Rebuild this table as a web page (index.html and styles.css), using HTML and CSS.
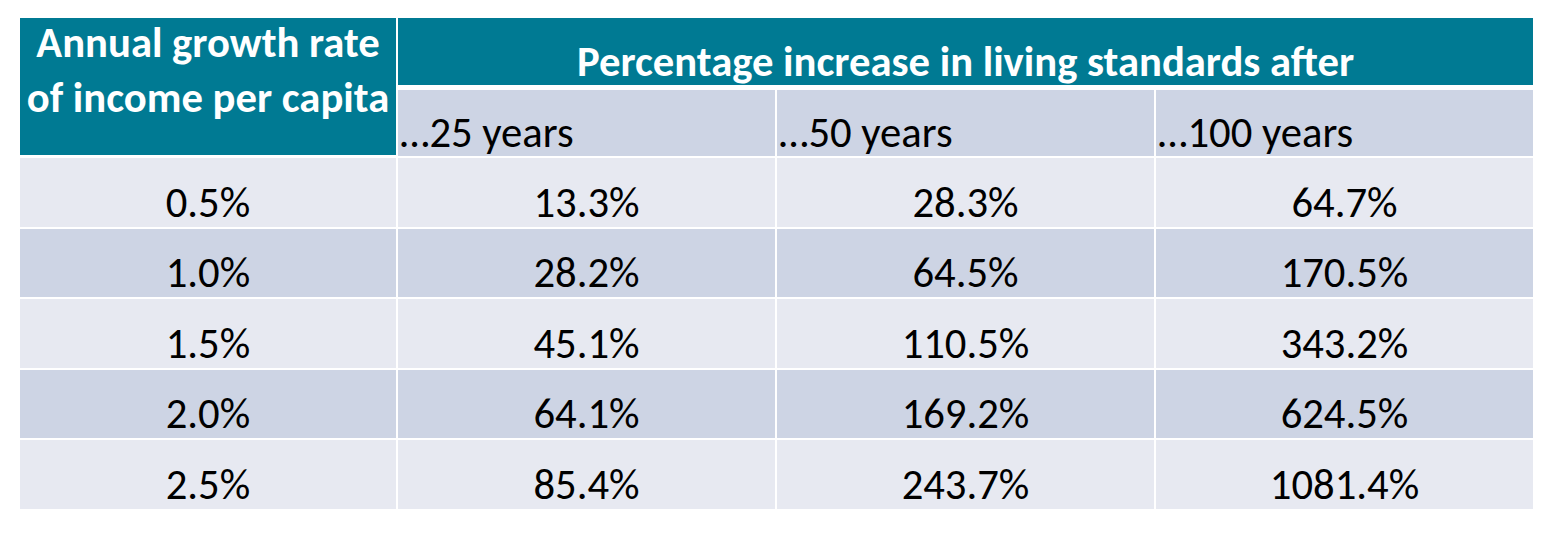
FILE: index.html
```html
<!DOCTYPE html>
<html lang="en">
<head>
<meta charset="utf-8">
<title>Growth table</title>
<link rel="stylesheet" href="styles.css">
</head>
<body>
<table class="growth">
  <colgroup>
    <col class="c-first">
    <col class="c-data">
    <col class="c-data">
    <col class="c-end">
  </colgroup>
  <thead>
    <tr class="head-top">
      <th class="rate-head" rowspan="2"><div class="rate-text">Annual growth rate<br>of income per capita</div></th>
      <th class="span-head" colspan="3">Percentage increase in living standards after</th>
    </tr>
    <tr class="head-sub">
      <th>…25 years</th>
      <th>…50 years</th>
      <th class="last">…100 years</th>
    </tr>
  </thead>
  <tbody>
    <tr class="band-light"><td>0.5%</td><td>13.3%</td><td>28.3%</td><td class="last">64.7%</td></tr>
    <tr class="band-dark"><td>1.0%</td><td>28.2%</td><td>64.5%</td><td class="last">170.5%</td></tr>
    <tr class="band-light"><td>1.5%</td><td>45.1%</td><td>110.5%</td><td class="last">343.2%</td></tr>
    <tr class="band-dark"><td>2.0%</td><td>64.1%</td><td>169.2%</td><td class="last">624.5%</td></tr>
    <tr class="band-light end"><td>2.5%</td><td>85.4%</td><td>243.7%</td><td class="last">1081.4%</td></tr>
  </tbody>
</table>
</body>
</html>
```
FILE: styles.css
```css
html, body {
  margin: 0;
  padding: 0;
  background: #ffffff;
}

body {
  padding: 18px 0 0 20px;
  font-family: Carlito, Calibri, Lato, "Open Sans", sans-serif;
  color: #000000;
}

.growth {
  border-collapse: separate;
  border-spacing: 0;
  table-layout: fixed;
  width: 1513px;
}

.c-first { width: 378px; }
.c-data { width: 379px; }
.c-end { width: 377px; }

.growth th,
.growth td {
  padding: 0;
  border-right: 2px solid #ffffff;
  font-size: 42.67px;
  line-height: 1;
}

.growth .last,
.growth .span-head {
  border-right: 0;
}

.head-top th {
  background: #007a93;
  color: #ffffff;
  font-weight: 700;
}

.growth .rate-head {
  vertical-align: top;
  text-align: center;
  font-size: 42.67px;
  line-height: 55px;
  padding-top: 0;
  border-bottom: 3px solid #ffffff;
}

.rate-text {
  margin-top: -3px;
}

.growth .span-head {
  height: 65px;
  padding-bottom: 2px;
  border-bottom: 5px solid #ffffff;
  vertical-align: bottom;
  text-align: center;
}

.growth .head-sub th {
  height: 64px;
  padding: 0 0 2px 2px;
  background: #cdd4e4;
  font-weight: 400;
  text-align: left;
  vertical-align: bottom;
  border-bottom: 2px solid #ffffff;
}

.growth td {
  height: 65.5px;
  padding-bottom: 3px;
  text-align: center;
  vertical-align: bottom;
  border-bottom: 2px solid #ffffff;
}

.growth tr.end td {
  border-bottom: 0;
}

.band-light td { background: #e7e9f1; }
.band-dark td { background: #cdd4e4; }
```
